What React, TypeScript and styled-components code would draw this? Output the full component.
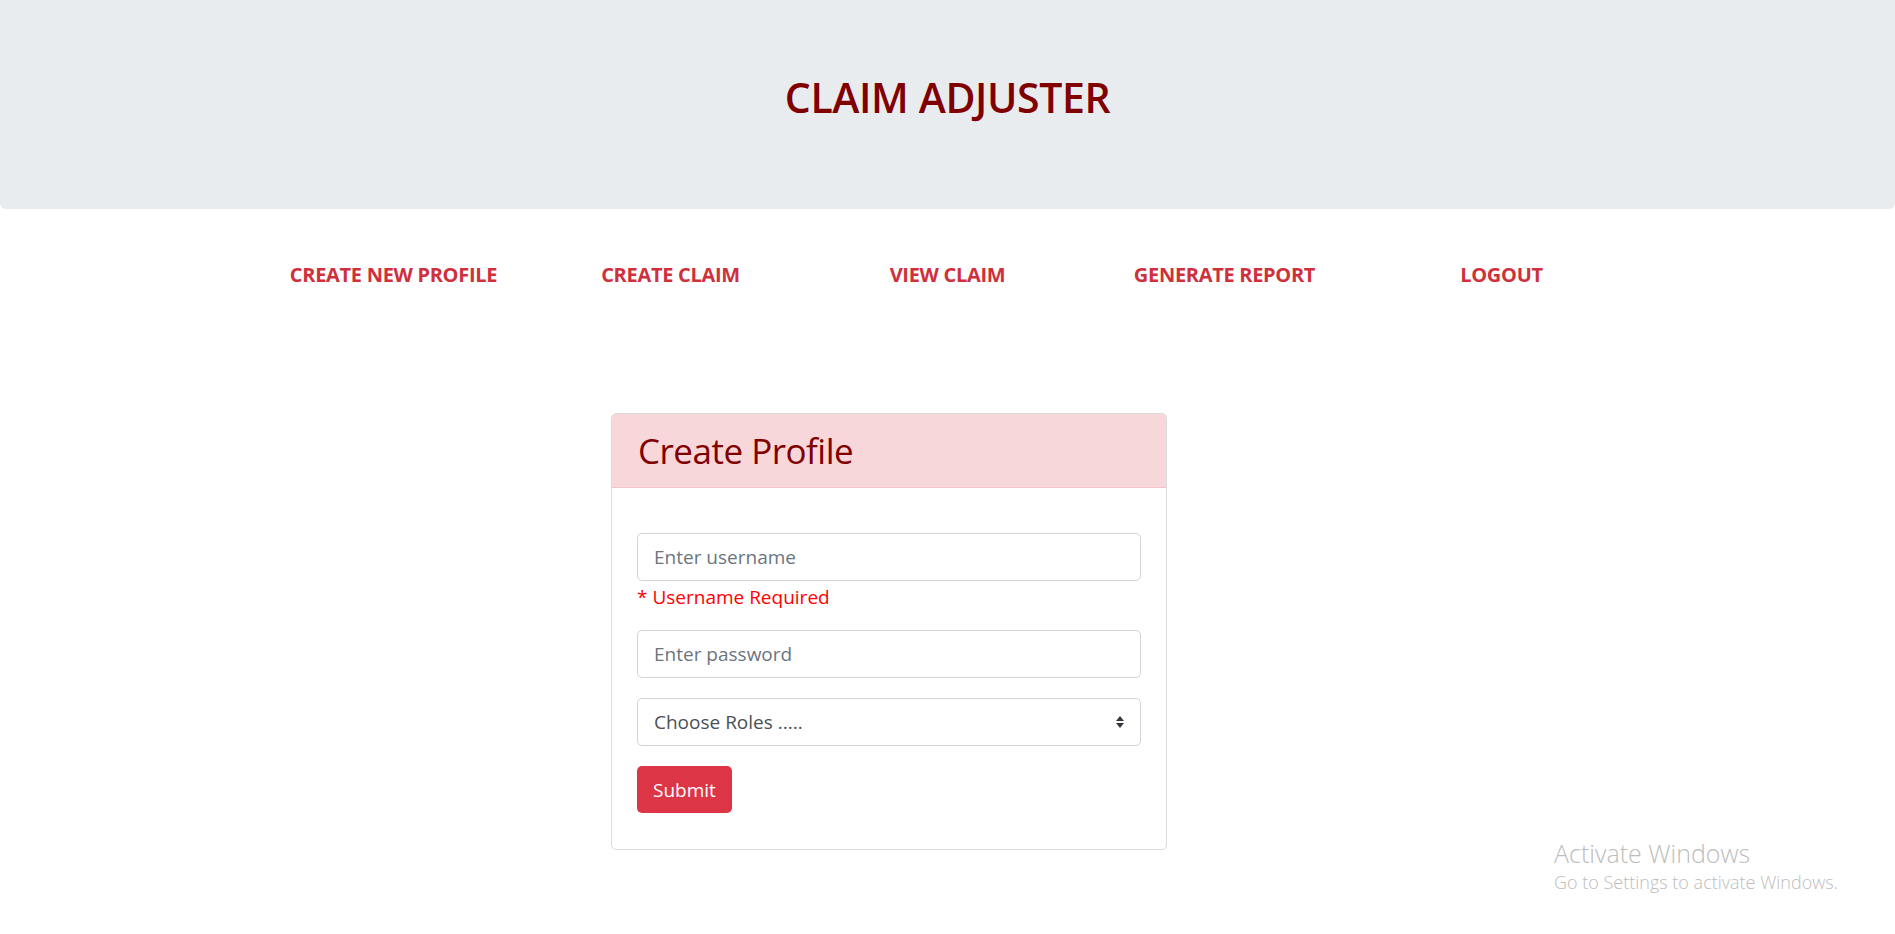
import React from "react"
import styled, { createGlobalStyle } from "styled-components"

const GlobalStyle = createGlobalStyle`
  html, body {
    margin: 0;
    padding: 0;
    background: #fff;
  }
  body {
    font-family: "Open Sans", "Noto Sans", "Liberation Sans", sans-serif;
    font-size: 20px;
    color: #212529;
  }
`

const Page = styled.div`
  position: relative;
  min-height: 934px;
`

const Jumbotron = styled.header`
  height: 209px;
  box-sizing: border-box;
  padding-bottom: 16px;
  background: #e9ecef;
  border-radius: 0 0 6px 6px;
  display: flex;
  align-items: center;
  justify-content: center;
`

const Title = styled.h1`
  margin: 0;
  font-size: 41px;
  font-weight: 600;
  color: #800000;
  letter-spacing: -0.4px;
`

const Nav = styled.nav`
  display: grid;
  grid-template-columns: repeat(5, 277px);
  justify-content: center;
  padding: 51px 0 0;
  height: 30px;
`

const NavLink = styled.a`
  text-align: center;
  font-size: 20px;
  line-height: 30px;
  font-weight: 700;
  color: #d0303b;
  text-decoration: none;
  letter-spacing: -0.3px;
  cursor: pointer;
`

const Row = styled.main`
  display: grid;
  grid-template-columns: 556px;
  padding: 123px 0 0 611px;
`

const Card = styled.section`
  border: 1px solid #dcdcdc;
  border-radius: 5px;
  background: #fff;
  overflow: hidden;
`

const CardHeader = styled.div`
  background: #f8d7da;
  border-bottom: 1px solid #f1c4c8;
  height: 73px;
  display: flex;
  align-items: center;
  padding: 0 26px;
`

const CardTitle = styled.h3`
  margin: 0;
  font-size: 35px;
  font-weight: 500;
  color: #800000;
  letter-spacing: -0.5px;
`

const CardBody = styled.form`
  display: flex;
  flex-direction: column;
  padding: 45px 25px 36px;
`

const Group = styled.div<{ $gap?: number }>`
  display: flex;
  flex-direction: column;
  margin-bottom: ${({ $gap }) => $gap ?? 20}px;
`

const Input = styled.input`
  box-sizing: border-box;
  height: 48px;
  width: 100%;
  border: 1px solid #ced4da;
  border-radius: 5px;
  padding: 0 16px;
  font-family: inherit;
  font-size: 19px;
  color: #495057;
  &::placeholder {
    color: #6c757d;
  }
`

const SelectBox = styled.div`
  position: relative;
  box-sizing: border-box;
  height: 48px;
  border: 1px solid #ced4da;
  border-radius: 5px;
  padding: 0 15px 0 16px;
  display: flex;
  align-items: center;
  justify-content: space-between;
  font-size: 19px;
  color: #495057;
`

const Error = styled.span`
  color: #ff0000;
  font-size: 19px;
  line-height: 26px;
  padding-top: 3px;
`

const SubmitButton = styled.button`
  align-self: flex-start;
  height: 47px;
  padding: 0 16px;
  border: none;
  border-radius: 5px;
  background: #dc3545;
  color: #fff;
  font-family: inherit;
  font-size: 19px;
  cursor: pointer;
`

const Watermark = styled.div`
  position: absolute;
  left: 1554px;
  top: 837px;
  font-family: "Open Sans", "Noto Sans", sans-serif;
  font-weight: 300;
  color: #bdbdbd;
  line-height: 1.3;
`

const WatermarkTitle = styled.div`
  font-size: 25px;
`

const WatermarkSub = styled.div`
  font-size: 18px;
  margin-top: 1px;
`

const SortIcon = () => (
  <svg width="10" height="14" viewBox="0 0 10 14">
    <path d="M5 1 L9 6 H1 Z" fill="#343a40" />
    <path d="M5 13 L9 8 H1 Z" fill="#343a40" />
  </svg>
)

const links = ["CREATE NEW PROFILE", "CREATE CLAIM", "VIEW CLAIM", "GENERATE REPORT", "LOGOUT"]

export default function App() {
  return (
    <Page>
      <GlobalStyle />
      <Jumbotron>
        <Title>CLAIM ADJUSTER</Title>
      </Jumbotron>
      <Nav>
        {links.map((l) => (
          <NavLink key={l}>{l}</NavLink>
        ))}
      </Nav>
      <Row>
        <Card>
          <CardHeader>
            <CardTitle>Create Profile</CardTitle>
          </CardHeader>
          <CardBody onSubmit={(e) => e.preventDefault()}>
            <Group $gap={20}>
              <Input placeholder="Enter username" />
              <Error>* Username Required</Error>
            </Group>
            <Group>
              <Input type="password" placeholder="Enter password" />
            </Group>
            <Group>
              <SelectBox>
                <span>Choose Roles .....</span>
                <SortIcon />
              </SelectBox>
            </Group>
            <SubmitButton type="submit">Submit</SubmitButton>
          </CardBody>
        </Card>
      </Row>
      <Watermark>
        <WatermarkTitle>Activate Windows</WatermarkTitle>
        <WatermarkSub>Go to Settings to activate Windows.</WatermarkSub>
      </Watermark>
    </Page>
  )
}
